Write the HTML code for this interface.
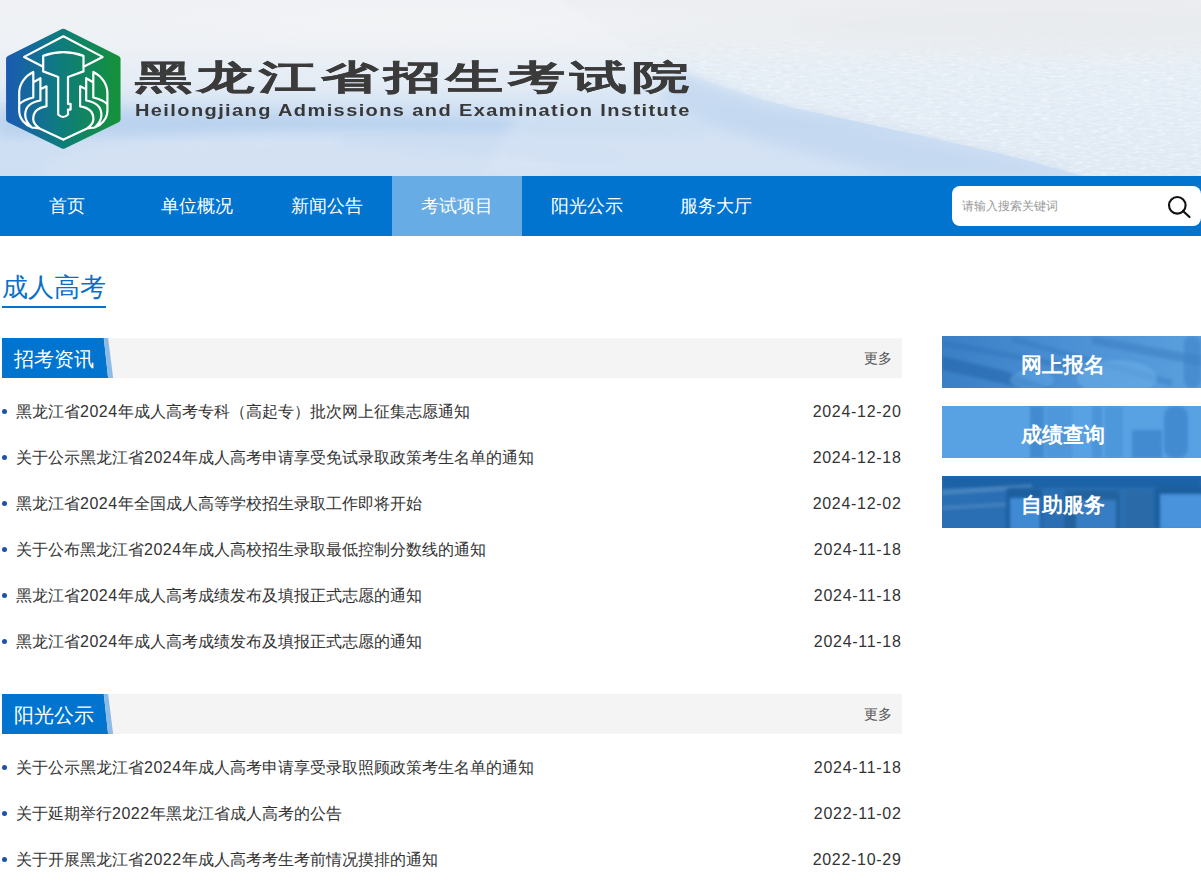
<!DOCTYPE html>
<html><head><meta charset="utf-8">
<style>
*{margin:0;padding:0;box-sizing:border-box}
html,body{width:1201px;height:890px;overflow:hidden;background:#fff;font-family:"Liberation Sans",sans-serif;color:#333}
#hd{position:absolute;left:0;top:0;width:1201px;height:176px;overflow:hidden;
background:linear-gradient(180deg,#e6e9ee 0%,#eef1f4 30%,#e9eef4 60%,#dfe8f3 100%)}
#nav{position:absolute;left:0;top:176px;width:1201px;height:60px;background:#0074cf}
#nav a{position:absolute;top:0;width:130px;height:60px;line-height:61px;text-align:center;color:#fff;font-size:18px;text-decoration:none}
#nav a.on{background:#68ace6}
#search{position:absolute;left:952px;top:186px;width:249px;height:40px;background:#fff;border-radius:8px}
#search span{position:absolute;left:10px;top:0;line-height:40px;font-size:12px;color:#9a9a9a}
#main{position:absolute;left:0;top:236px}
.ttl{position:absolute;left:2px;top:36px;font-size:26px;color:#0a6fc9;white-space:nowrap}
.uline{position:absolute;left:2px;top:70px;width:104px;height:2px;background:#0a6fc9}
.sec{position:absolute;left:2px;width:900px;height:40px;background:#f4f4f4}
.sec svg{position:absolute;left:0;top:0}
.sec b{font-weight:normal;position:absolute;left:12px;top:1px;line-height:40px;color:#fff;font-size:20px}
.sec .more{position:absolute;right:10px;top:0;line-height:40px;font-size:14px;color:#555}
.li{position:absolute;left:0;width:902px;height:24px;font-size:16px;line-height:24px;color:#333}
.li i{position:absolute;left:2px;top:9.5px;width:5px;height:5px;border-radius:50%;background:#1f50a8}
.li span{position:absolute;left:16px;top:1px;white-space:nowrap}
.li em{font-style:normal;position:absolute;right:0.5px;top:1px;letter-spacing:0.7px}
.li u{text-decoration:none;letter-spacing:0.5px}
.btn{position:absolute;left:942px;width:259px;height:52px;overflow:hidden}
.btn svg{position:absolute;left:0;top:0}
.btn b{position:absolute;left:79px;top:2.5px;line-height:52px;color:#fff;font-weight:bold;font-size:21px;white-space:nowrap}
#tcn{position:absolute;left:135px;top:52px;font-size:34px;font-weight:bold;color:#3b3b3b;white-space:nowrap;transform-origin:0 0;transform:scaleX(1.68);letter-spacing:3px;line-height:50px;-webkit-text-stroke:0.4px #3b3b3b}
#ten{position:absolute;left:135px;top:99px;font-size:16px;font-weight:bold;color:#383838;white-space:nowrap;line-height:24px;letter-spacing:1.12px;transform-origin:0 0;transform:scaleX(1.25)}
</style></head><body>
<div id="hd">
<svg width="1201" height="176" style="position:absolute;left:0;top:0">
<defs>
<linearGradient id="gsnow" x1="0" y1="0" x2="0" y2="176" gradientUnits="userSpaceOnUse">
<stop offset="0" stop-color="#eff1f4"/><stop offset="0.25" stop-color="#eef1f5"/><stop offset="0.5" stop-color="#e2ebf5"/><stop offset="0.62" stop-color="#cfe0f3"/><stop offset="0.7" stop-color="#c4d9f1"/><stop offset="0.8" stop-color="#cfdff3"/><stop offset="1" stop-color="#cddef3"/></linearGradient>
<linearGradient id="gw2" x1="0" y1="0" x2="0" y2="176" gradientUnits="userSpaceOnUse"><stop offset="0" stop-color="#eceef1"/><stop offset="0.22" stop-color="#eceff2"/><stop offset="0.4" stop-color="#e6eef6"/><stop offset="1" stop-color="#e1eaf4"/></linearGradient>
<linearGradient id="gshore" x1="0" y1="0" x2="1" y2="0"><stop offset="0" stop-color="#c3d8f1" stop-opacity="0"/><stop offset="0.5" stop-color="#bfd5ef" stop-opacity="0.8"/><stop offset="1" stop-color="#bad2ee"/></linearGradient>
<radialGradient id="gfog" cx="0.5" cy="0.5" r="0.5"><stop offset="0" stop-color="#f3f4f6" stop-opacity="0.9"/><stop offset="1" stop-color="#f3f4f6" stop-opacity="0"/></radialGradient>
<filter id="bh"><feGaussianBlur stdDeviation="6"/></filter>
<filter id="tex" x="0" y="0" width="100%" height="100%"><feTurbulence type="fractalNoise" baseFrequency="0.12 0.5" numOctaves="2" seed="3"/><feColorMatrix values="0 0 0 0 1  0 0 0 0 1  0 0 0 0 1  0 0 0 1.6 -0.75"/></filter>
<filter id="tex2" x="0" y="0" width="100%" height="100%"><feTurbulence type="fractalNoise" baseFrequency="0.1 0.45" numOctaves="2" seed="7"/><feColorMatrix values="0 0 0 0 0.62  0 0 0 0 0.72  0 0 0 0 0.85  0 0 0 1.4 -0.72"/></filter>
<linearGradient id="mg" x1="0" y1="0" x2="0" y2="176" gradientUnits="userSpaceOnUse"><stop offset="0.12" stop-color="#fff" stop-opacity="0"/><stop offset="0.4" stop-color="#fff" stop-opacity="1"/></linearGradient><mask id="cw" maskUnits="userSpaceOnUse" x="0" y="0" width="1201" height="176"><path d="M675 69 C720 85 760 100 803 110 C850 120 880 127 909 133 C950 142 985 150 1014 157 L1084 176 L1201 176 L1201 0 L560 0 C600 30 640 55 675 69 Z" fill="url(#mg)"/></mask>
<filter id="bs"><feGaussianBlur stdDeviation="0.6"/></filter>
</defs>
<rect width="1201" height="176" fill="url(#gsnow)"/>
<path d="M0 106 C150 110 250 114 400 118 C500 122 600 126 700 130 L700 136 C550 134 400 128 250 133 C150 137 80 137 0 138 Z" fill="#b3cdec" opacity="0.55" filter="url(#bh)"/>
<ellipse cx="300" cy="170" rx="260" ry="36" fill="#dae5f4" opacity="0.45" filter="url(#bh)"/>
<path d="M340 136 C420 140 500 148 620 154 L620 159 C500 155 420 146 340 141 Z" fill="#b0cae9" opacity="0.4" filter="url(#bh)"/>
<path d="M480 176 L520 110 C600 90 640 75 675 69 C720 85 760 100 803 110 C850 120 880 127 909 133 C950 142 985 150 1014 157 L1084 176 Z" fill="#d9e6f5" opacity="0.55" filter="url(#bh)"/>
<path d="M675 69 C720 85 760 100 803 110 C850 120 880 127 909 133 C950 142 985 150 1014 157 L1084 176 L1201 176 L1201 0 L560 0 C600 30 640 55 675 69 Z" fill="url(#gw2)" filter="url(#bs)"/>
<g mask="url(#cw)"><rect x="560" y="0" width="641" height="176" filter="url(#tex)" opacity="0.8"/><rect x="560" y="0" width="641" height="176" filter="url(#tex2)" opacity="0.6"/></g>
<path d="M680 72 C730 90 760 104 803 112 C850 122 880 129 909 135 C950 144 985 152 1014 159 L1080 176 L900 176 C860 166 820 156 780 146 C740 136 700 120 660 100 Z" fill="#c0d6f0" opacity="0.7" filter="url(#bh)"/>
<ellipse cx="420" cy="22" rx="320" ry="30" fill="url(#gfog)"/>
<ellipse cx="1050" cy="25" rx="260" ry="28" fill="#e6e8ec" opacity="0.35" filter="url(#bh)"/>
</svg>
<svg width="130" height="140" viewBox="0 20 130 140" style="position:absolute;left:0;top:20px">
<defs><linearGradient id="glogo" x1="0" y1="0" x2="1" y2="0"><stop offset="0" stop-color="#1a5cb0"/><stop offset="0.45" stop-color="#0e7b80"/><stop offset="1" stop-color="#15913c"/></linearGradient></defs>
<polygon points="63.3,32 117.3,58.8 117.3,119.3 63.3,145.5 9.3,119.3 9.3,58.8" fill="url(#glogo)" stroke="url(#glogo)" stroke-width="6.5" stroke-linejoin="round"/>
<g fill="none" stroke="#fff" stroke-width="2.2" stroke-linejoin="round" stroke-linecap="round">
<path d="M42.2 66.2 L24.1 56.9 L63.4 36.3 L102.6 56.9 L84.6 66.2"/>
<path d="M43.2 55.9 Q63.4 48.5 83.5 55.9 L83.5 71.4 L68 77 L68 103.9 L70.6 103.9 L70.6 109.6 L68 109.6 L68 114.5 Q63.1 119.5 58.2 114.5 L58.2 77 L43.2 71.4 Z"/>
<path d="M33.3 72 C25 76 19.2 84 19.2 93 L19.2 111 C19.5 119 25 125 32 127.5 L39.5 128.4 L63.1 139.6
M33.3 72 L33.3 97.5 C27 99 22 101.5 19.5 104
M34.4 81.8 L40.4 78.2 L40.4 100.5 C31 102 25.2 107 25.2 115 C25.2 120 28 124 32 127.5
M41.4 88.8 L46.5 86.3 L46.5 106.3 C38 107.5 33.2 112 33.2 119 C33.2 123 36 126 39.5 128.4"/>
<path d="M93.3 72 C101.6 76 107.4 84 107.4 93 L107.4 111 C107.1 119 101.6 125 94.6 127.5 L87.1 128.4 L63.5 139.6 M93.3 72 L93.3 97.5 C99.6 99 104.6 101.5 107.1 104 M92.2 81.8 L86.2 78.2 L86.2 100.5 C95.6 102 101.4 107 101.4 115 C101.4 120 98.6 124 94.6 127.5 M85.2 88.8 L80.1 86.3 L80.1 106.3 C88.6 107.5 93.4 112 93.4 119 C93.4 123 90.6 126 87.1 128.4"/>
</g>
</svg>
<div id="tcn">黑龙江省招生考试院</div>
<div id="ten">Heilongjiang Admissions and Examination Institute</div>
</div>
<div id="nav">
<a style="left:2px">首页</a>
<a style="left:131.5px">单位概况</a>
<a style="left:261.5px">新闻公告</a>
<a class="on" style="left:392px">考试项目</a>
<a style="left:522px">阳光公示</a>
<a style="left:651px">服务大厅</a>
</div>
<div id="search"><span>请输入搜索关键词</span><svg width="40" height="40" style="position:absolute;left:205px;top:0" viewBox="1157 186 40 40"><circle cx="1177.3" cy="205.3" r="8.3" fill="none" stroke="#111" stroke-width="2.1"/><line x1="1183" x2="1189.5" y1="211" y2="217" stroke="#111" stroke-width="2.2" stroke-linecap="round"/></svg></div>
<div class="ttl" style="top:270px;left:1.5px">成人高考</div>
<div class="uline" style="top:306px"></div>

<div class="sec" style="top:338px"><svg width="120" height="40"><polygon points="0,0 101.8,0 106.1,40 0,40" fill="#0074cf"/><polygon points="101.8,0 106.1,0 111.1,40 106.1,40" fill="#8dbbe6"/></svg><b>招考资讯</b><div class="more">更多</div></div>
<div class="li" style="top:399px"><i></i><span>黑龙江省<u>2024</u>年成人高考专科（高起专）批次网上征集志愿通知</span><em>2024-12-20</em></div>
<div class="li" style="top:445px"><i></i><span>关于公示黑龙江省<u>2024</u>年成人高考申请享受免试录取政策考生名单的通知</span><em>2024-12-18</em></div>
<div class="li" style="top:491px"><i></i><span>黑龙江省<u>2024</u>年全国成人高等学校招生录取工作即将开始</span><em>2024-12-02</em></div>
<div class="li" style="top:537px"><i></i><span>关于公布黑龙江省<u>2024</u>年成人高校招生录取最低控制分数线的通知</span><em>2024-11-18</em></div>
<div class="li" style="top:583px"><i></i><span>黑龙江省<u>2024</u>年成人高考成绩发布及填报正式志愿的通知</span><em>2024-11-18</em></div>
<div class="li" style="top:629px"><i></i><span>黑龙江省<u>2024</u>年成人高考成绩发布及填报正式志愿的通知</span><em>2024-11-18</em></div>

<div class="sec" style="top:694px"><svg width="120" height="40"><polygon points="0,0 101.8,0 106.1,40 0,40" fill="#0074cf"/><polygon points="101.8,0 106.1,0 111.1,40 106.1,40" fill="#8dbbe6"/></svg><b>阳光公示</b><div class="more">更多</div></div>
<div class="li" style="top:755px"><i></i><span>关于公示黑龙江省<u>2024</u>年成人高考申请享受录取照顾政策考生名单的通知</span><em>2024-11-18</em></div>
<div class="li" style="top:801px"><i></i><span>关于延期举行<u>2022</u>年黑龙江省成人高考的公告</span><em>2022-11-02</em></div>
<div class="li" style="top:847px"><i></i><span>关于开展黑龙江省<u>2022</u>年成人高考考生考前情况摸排的通知</span><em>2022-10-29</em></div>

<div class="btn" style="top:336px"><svg width="259" height="52"><defs><filter id="bl" x="-10%" y="-10%" width="120%" height="120%"><feGaussianBlur stdDeviation="1.5"/></filter></defs>
<defs><linearGradient id="b1" x1="0" y1="0" x2="1" y2="0"><stop offset="0" stop-color="#3a7fc5"/><stop offset="0.45" stop-color="#4a8fd3"/><stop offset="1" stop-color="#5a9fdd"/></linearGradient></defs>
<rect width="259" height="52" fill="url(#b1)"/>
<path d="M0 20 L60 34 L110 52 L80 52 L0 34Z" fill="#2566ab" opacity="0.6" filter="url(#bl)"/>
<path d="M0 4 L140 30 L140 36 L0 10Z" fill="#2f72ba" opacity="0.45" filter="url(#bl)"/>
<path d="M70 0 L230 44 L230 50 L70 6Z" fill="#2f72ba" opacity="0.35" filter="url(#bl)"/>
<path d="M150 0 L259 20 L259 30 L150 8Z" fill="#3778be" opacity="0.45" filter="url(#bl)"/>
<ellipse cx="175" cy="42" rx="40" ry="18" fill="#6cb0e8" opacity="0.55" filter="url(#bl)"/>
<ellipse cx="90" cy="44" rx="22" ry="10" fill="#62a8e6" opacity="0.5" filter="url(#bl)"/>
<rect x="242" y="0" width="17" height="52" rx="8" fill="#3e82c8" opacity="0.6" filter="url(#bl)"/>
</svg><b>网上报名</b></div>
<div class="btn" style="top:406px"><svg width="259" height="52">
<rect width="259" height="52" fill="#58a1e2"/>
<rect filter="url(#bl)" x="88" y="0" width="14" height="52" fill="#3d86cd" opacity="0.8"/>
<rect filter="url(#bl)" x="104" y="0" width="26" height="52" fill="#4a93d8" opacity="0.7"/>
<rect filter="url(#bl)" x="150" y="0" width="10" height="52" fill="#4c94d8"/>
<rect filter="url(#bl)" x="163" y="0" width="18" height="52" fill="#4d97db"/>
<rect filter="url(#bl)" x="190" y="24" width="30" height="28" fill="#3d86cd" opacity="0.8"/>
<rect filter="url(#bl)" x="222" y="0" width="24" height="52" rx="10" fill="#3f89d0" opacity="0.9"/>
</svg><b>成绩查询</b></div>
<div class="btn" style="top:476px"><svg width="259" height="52">
<rect width="259" height="52" fill="#2a6fb4"/>
<rect width="259" height="12" fill="#1f62a6" filter="url(#bl)"/>
<path d="M0 14 L90 8 L90 13 L0 19Z" fill="#5a92c6" opacity="0.6" filter="url(#bl)"/>
<path d="M0 30 L70 26 L70 30 L0 34Z" fill="#5a92c6" opacity="0.5" filter="url(#bl)"/>
<rect x="64" y="12" width="36" height="42" rx="4" fill="#1f5f9f" filter="url(#bl)"/>
<rect x="68" y="22" width="30" height="32" fill="#3f89d3" filter="url(#bl)"/>
<rect x="122" y="14" width="56" height="40" rx="4" fill="#23649f" filter="url(#bl)"/>
<rect x="134" y="24" width="40" height="30" fill="#3a84cc" opacity="0.8" filter="url(#bl)"/>
<rect x="182" y="14" width="30" height="40" fill="#2a6aa8" filter="url(#bl)"/>
<rect x="212" y="10" width="50" height="44" rx="6" fill="#1f5f9f" filter="url(#bl)"/>
<rect x="218" y="18" width="44" height="36" fill="#4892dc" filter="url(#bl)"/>
</svg><b>自助服务</b></div>
</body></html>
